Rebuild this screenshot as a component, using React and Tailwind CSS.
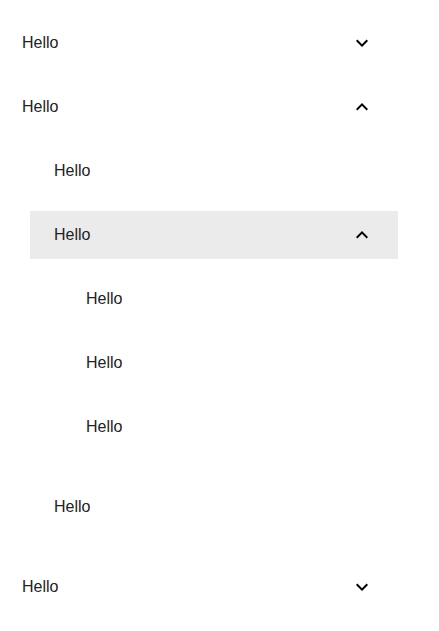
import React, { useState } from 'react';

// data menu bertingkat
const menu = [
  { id: 'a', label: 'Hello', children: [{ id: 'a1', label: 'Hello' }] },
  {
    id: 'b',
    label: 'Hello',
    children: [
      { id: 'b1', label: 'Hello' },
      {
        id: 'b2',
        label: 'Hello',
        children: [
          { id: 'b2a', label: 'Hello' },
          { id: 'b2b', label: 'Hello' },
          { id: 'b2c', label: 'Hello' },
        ],
      },
      { id: 'b3', label: 'Hello' },
    ],
  },
  { id: 'c', label: 'Hello', children: [{ id: 'c1', label: 'Hello' }] },
];

const ChevronDown = () => (
  <svg width="24" height="24" viewBox="0 0 24 24" fill="#000">
    <path d="M16.59 8.59L12 13.17 7.41 8.59 6 10l6 6 6-6z" />
  </svg>
);

const ChevronUp = () => (
  <svg width="24" height="24" viewBox="0 0 24 24" fill="#000">
    <path d="M12 8l-6 6 1.41 1.41L12 10.83l4.59 4.58L18 14z" />
  </svg>
);

const MenuItem = ({ item, open, onToggle, active, level }) => {
  const hasChildren = !!item.children;
  return (
    <div
      onClick={hasChildren ? () => onToggle(item.id) : undefined}
      className={`flex h-12 items-center justify-between pr-6 ${
        level === 0 ? 'pl-[22px]' : 'pl-6'
      } ${active ? 'bg-[#ebebeb]' : ''} ${hasChildren ? 'cursor-pointer' : ''}`}
    >
      <span className="text-[16px] leading-normal text-[#222]">{item.label}</span>
      {hasChildren && (open ? <ChevronUp /> : <ChevronDown />)}
    </div>
  );
};

const MenuList = ({ items, level, openIds, onToggle, activeId }) => (
  <div className="flex flex-col gap-4">
    {items.map((item) => {
      const open = openIds.includes(item.id);
      return (
        <div key={item.id} className="flex flex-col gap-4">
          <MenuItem
            item={item}
            open={open}
            onToggle={onToggle}
            active={item.id === activeId}
            level={level}
          />
          {item.children && open && (
            <div className={`pb-4 ${level === 0 ? 'pl-[30px]' : 'pl-8'}`}>
              <MenuList
                items={item.children}
                level={level + 1}
                openIds={openIds}
                onToggle={onToggle}
                activeId={activeId}
              />
            </div>
          )}
        </div>
      );
    })}
  </div>
);

const App = () => {
  const [openIds, setOpenIds] = useState(['b', 'b2']);

  const handleToggle = (id) => {
    setOpenIds((prev) => (prev.includes(id) ? prev.filter((x) => x !== id) : [...prev, id]));
  };

  return (
    <div className="min-h-screen bg-white pt-[19px] pr-[41px]" style={{ fontFamily: '"Liberation Sans", Arial, sans-serif' }}>
      <MenuList items={menu} level={0} openIds={openIds} onToggle={handleToggle} activeId="b2" />
    </div>
  );
};

export default App;
